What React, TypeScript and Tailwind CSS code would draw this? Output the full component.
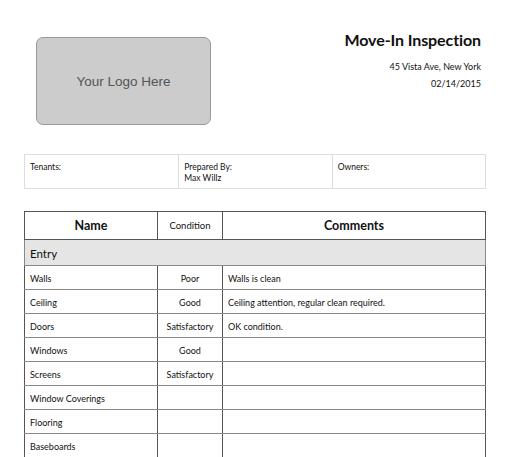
import React from 'react';

const rows = [
  { name: 'Walls', condition: 'Poor', comment: 'Walls is clean' },
  { name: 'Ceiling', condition: 'Good', comment: 'Ceiling attention, regular clean required.' },
  { name: 'Doors', condition: 'Satisfactory', comment: 'OK condition.' },
  { name: 'Windows', condition: 'Good', comment: '' },
  { name: 'Screens', condition: 'Satisfactory', comment: '' },
  { name: 'Window Coverings', condition: '', comment: '' },
  { name: 'Flooring', condition: '', comment: '' },
  { name: 'Baseboards', condition: '', comment: '' },
];

const App = () => {
  return (
    <div className="w-[512px] h-[457px] overflow-hidden bg-white text-[#111] font-['Lato','Open_Sans',sans-serif]">
      {/* Header */}
      <div className="flex justify-between pl-[36px] pr-[31px] pt-[29px]">
        <div className="mt-[8px] w-[175px] h-[88px] rounded-[7px] border border-[#999] bg-[#cccccc] flex items-center justify-center pt-[3px]">
          <span className="font-['Liberation_Sans',sans-serif] text-[13.5px] text-[#555]">Your Logo Here</span>
        </div>
        <div className="flex flex-col items-end">
          <div className="text-[16px] font-bold leading-[22px] tracking-[-0.1px]">Move-In Inspection</div>
          <div className="text-[9px] leading-[12px] mt-[10px]">45 Vista Ave, New York</div>
          <div className="text-[9px] leading-[12px] mt-[5px]">02/14/2015</div>
        </div>
      </div>

      {/* Info box */}
      <div className="ml-[24px] w-[462px] mt-[29px] h-[35px] border border-[#ddd] grid grid-cols-3 text-[8.5px] leading-[11px]">
        <div className="px-[5px] pt-[7px]">Tenants:</div>
        <div className="px-[5px] pt-[7px] border-l border-[#ddd]">
          <div>Prepared By:</div>
          <div>Max Willz</div>
        </div>
        <div className="px-[5px] pt-[7px] border-l border-[#ddd]">Owners:</div>
      </div>

      {/* Table */}
      <table className="mx-[24px] mt-[22px] w-[462px] border-collapse table-fixed border border-[#777]">
        <colgroup>
          <col className="w-[133px]" />
          <col className="w-[65px]" />
          <col />
        </colgroup>
        <thead>
          <tr className="h-[28px]">
            <th className="border border-[#555] text-[12.5px] font-bold pt-[2px]">Name</th>
            <th className="border border-[#555] text-[9.5px] font-normal pt-[2px]">Condition</th>
            <th className="border border-[#555] text-[12.5px] font-bold pt-[2px]">Comments</th>
          </tr>
        </thead>
        <tbody>
          <tr className="h-[26px] bg-[#e5e5e5]">
            <td colSpan={3} className="border border-[#888] px-[5px] text-[11.5px] pt-[2px]">Entry</td>
          </tr>
          {rows.map(r => (
            <tr key={r.name} className="h-[24px] text-[9px]">
              <td className="border-y border-y-[#888] border-x border-x-[#555] px-[5px] pt-[2px]">{r.name}</td>
              <td className="border-y border-y-[#888] border-x border-x-[#555] text-center pt-[2px]">{r.condition}</td>
              <td className="border-y border-y-[#888] border-x border-x-[#555] px-[5px] pt-[2px]">{r.comment}</td>
            </tr>
          ))}
        </tbody>
      </table>
    </div>
  );
};

export default App;
